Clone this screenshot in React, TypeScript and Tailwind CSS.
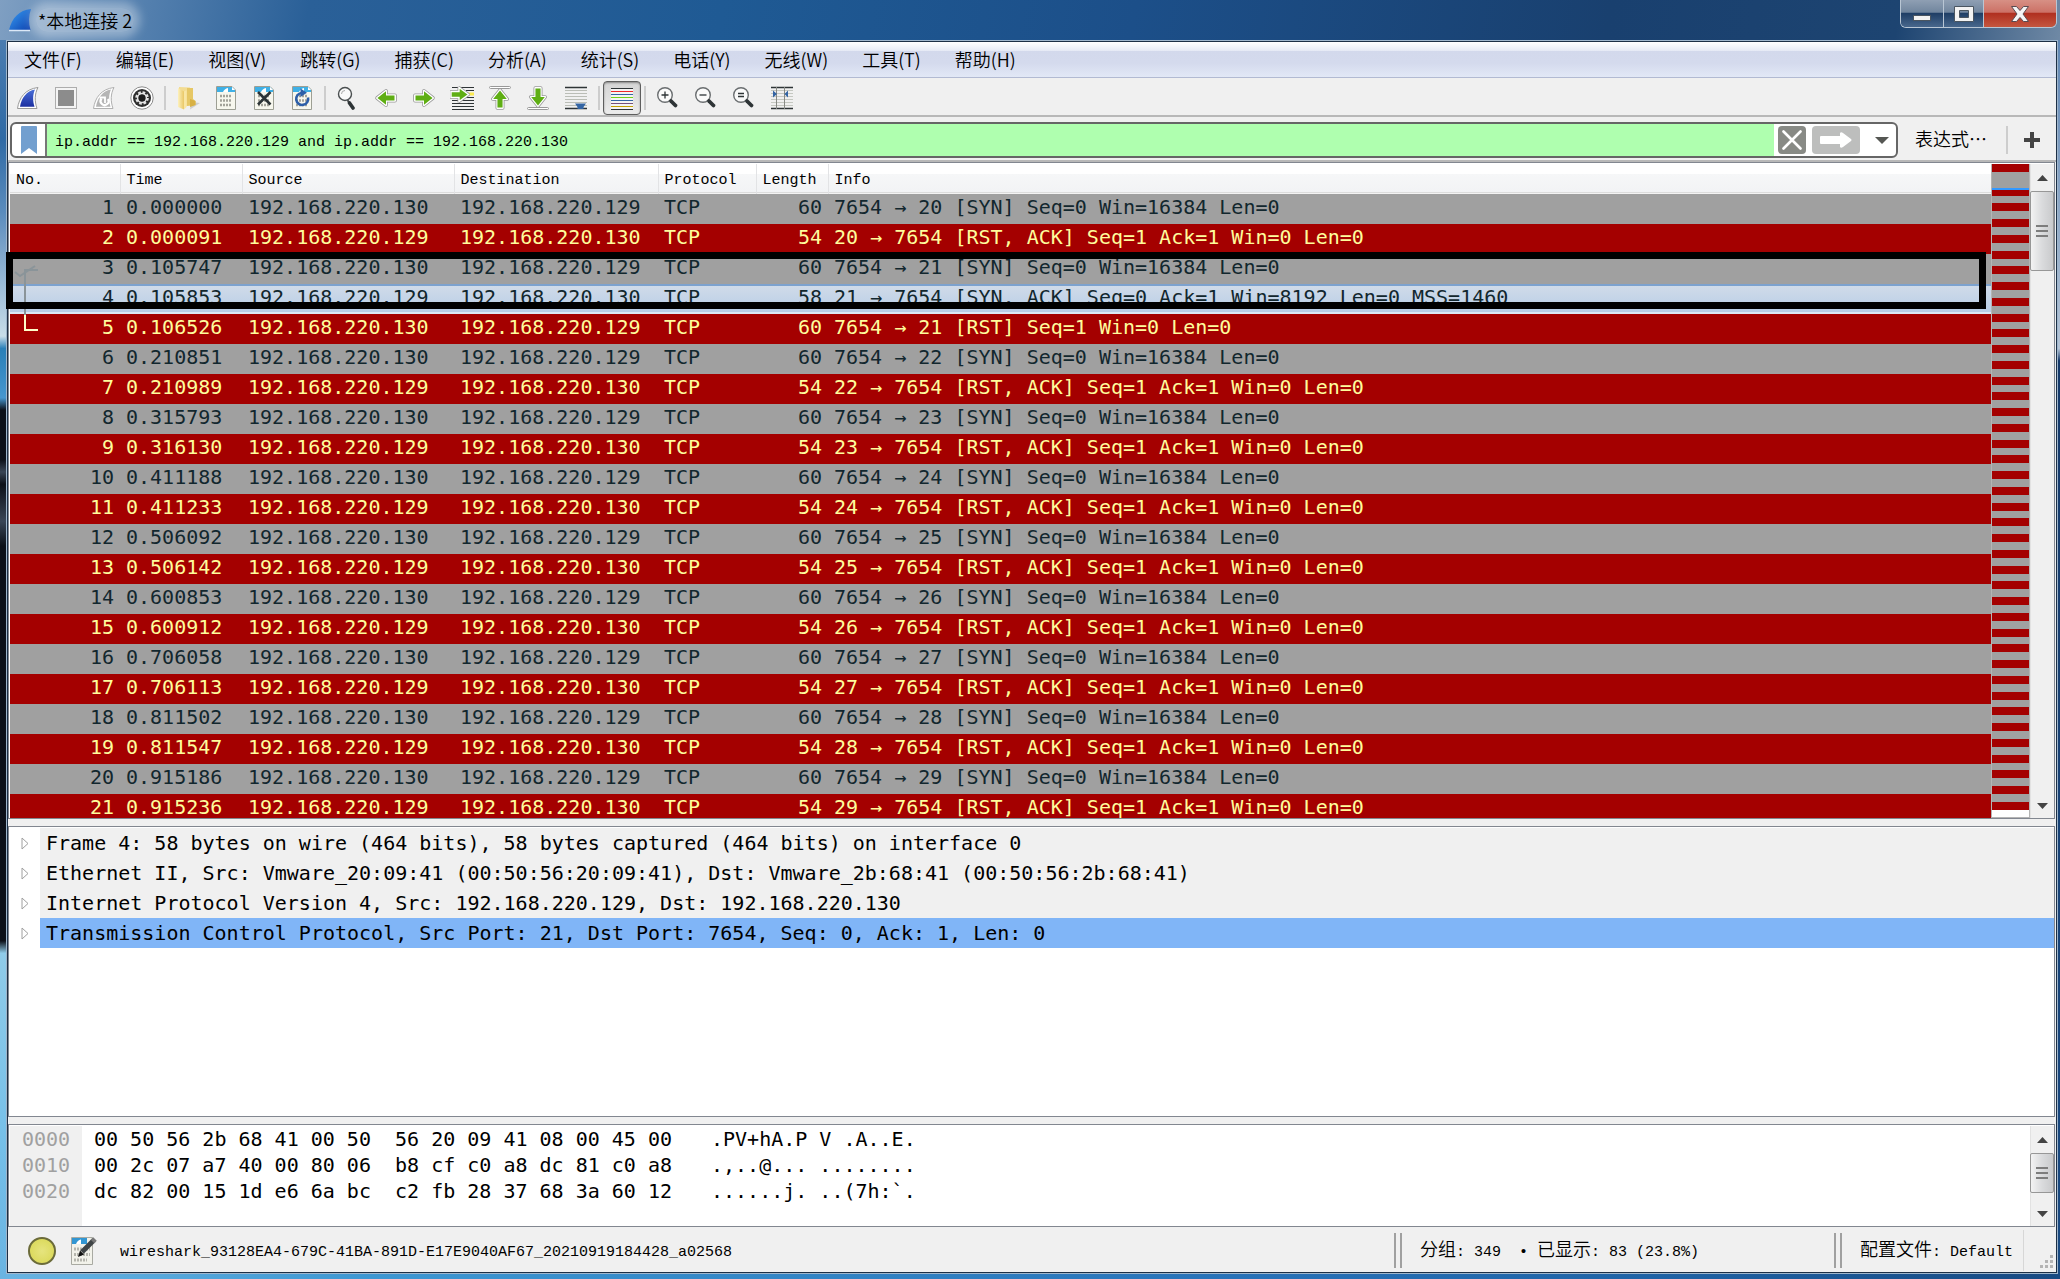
import React from "react";

const MONO = "font-['DejaVu_Sans_Mono',monospace]";
const SERIF = "font-['Liberation_Mono','Noto_Sans_CJK_SC',monospace]";
const CJK = "font-['Noto_Sans_CJK_SC',sans-serif]";

type Packet = { no: number; time: string; rev: boolean; len: number; info: string; kind: "syn" | "rst" | "sel" };

const times = [
  "0.000000", "0.000091", "0.105747", "0.105853", "0.106526", "0.210851", "0.210989",
  "0.315793", "0.316130", "0.411188", "0.411233", "0.506092", "0.506142", "0.600853",
  "0.600912", "0.706058", "0.706113", "0.811502", "0.811547", "0.915186", "0.915236",
];

const packets: Packet[] = times.map((time, i) => {
  const no = i + 1;
  if (no === 4)
    return { no, time, rev: true, len: 58, kind: "sel", info: "21 → 7654 [SYN, ACK] Seq=0 Ack=1 Win=8192 Len=0 MSS=1460" };
  if (no === 5) return { no, time, rev: false, len: 60, kind: "rst", info: "7654 → 21 [RST] Seq=1 Win=0 Len=0" };
  const port = no < 4 ? 20 + Math.floor(i / 2) : 22 + Math.floor((no - 6) / 2);
  const syn = no < 4 ? no % 2 === 1 : no % 2 === 0;
  return syn
    ? { no, time, rev: false, len: 60, kind: "syn", info: `7654 → ${port} [SYN] Seq=0 Win=16384 Len=0` }
    : { no, time, rev: true, len: 54, kind: "rst", info: `${port} → 7654 [RST, ACK] Seq=1 Ack=1 Win=0 Len=0` };
});

const rowStyle = {
  syn: "bg-[#a0a0a0] text-[#12272e]",
  rst: "bg-[#a40000] text-[#fffc9c]",
  sel: "bg-linear-to-b from-[#d2dce9] to-[#b6cce6] text-[#12272e] shadow-[inset_0_2px_0_#7da2ce,inset_0_-2px_0_#dce8f5]",
};

/* ---------- icons ---------- */

const Svg = ({ children, size = 24 }: { children: React.ReactNode; size?: number }) => (
  <svg width={size} height={size} viewBox="0 0 24 24" fill="none" aria-hidden="true">
    {children}
  </svg>
);

const finPath = "M1.5 22.5C3 12 9 3 22 1.5C18.5 8 18.5 15 21 22.5Z";

const FinStart = () => (
  <Svg>
    <defs>
      <linearGradient id="fin" x1="0" y1="0" x2="0" y2="1">
        <stop offset="0" stopColor="#4a6fd8" />
        <stop offset="1" stopColor="#1b2ea0" />
      </linearGradient>
    </defs>
    <path d={finPath} fill="#fff" stroke="#9a9a9a" />
    <path d="M4 20.8C5.5 12 10.500 5 19 3.500C16.500 9 16.800 15 18.500 20.800Z" fill="url(#fin)" />
  </Svg>
);
const Stop = () => (
  <Svg>
    <rect x="1.500" y="1.500" width="21" height="21" fill="#f4f4f4" stroke="#adadad" />
    <rect x="4" y="4" width="16" height="16" fill="#8c8c8c" />
  </Svg>
);
const FinRestart = () => (
  <Svg>
    <path d={finPath} fill="#fff" stroke="#b0b0b0" />
    <path d="M4 20.8C5.500 12 10.500 5 19 3.500C16.500 9 16.800 15 18.500 20.800Z" fill="#b5b5b5" />
    <path d="M9.500 12.500A4 4 0 1 0 16 13" stroke="#fff" strokeWidth="2.200" />
    <path d="M7.500 11.500H13V17" stroke="#fff" strokeWidth="1.800" />
  </Svg>
);
const Options = () => (
  <Svg>
    <circle cx="12" cy="12" r="11.200" fill="#fff" stroke="#8b8b8b" />
    <circle cx="12" cy="12" r="9" fill="#2e2e2e" />
    <circle cx="12" cy="12" r="5.500" stroke="#e4e4e4" strokeWidth="2.600" strokeDasharray="2.600 1.700" />
    <circle cx="12" cy="12" r="4.400" fill="none" stroke="#e4e4e4" strokeWidth="1.500" />
    <circle cx="12" cy="12" r="3.200" fill="#1c1c1c" />
  </Svg>
);
const Folder = () => (
  <Svg>
    <defs>
      <linearGradient id="fold" x1="0" y1="0" x2="1" y2="0">
        <stop offset="0" stopColor="#fdf1bd" />
        <stop offset="1" stopColor="#e9c765" />
      </linearGradient>
    </defs>
    <path d="M15 16L24 17L14 23.500Z" fill="#cfcfcf" />
    <path d="M3 1L14 1.500V19L8 21L3 20Z" fill="#f3dc92" />
    <path d="M11 2H17V13L19.500 15V19L11 20Z" fill="#e6c765" />
    <path d="M14 13L19.500 15V19L14 21Z" fill="#d8b145" />
    <path d="M2 2L8 5.500V23.500L2 21Z" fill="url(#fold)" />
    <path d="M8 5.500L10.500 4V21L8 23.500Z" fill="#f9e6a4" />
  </Svg>
);

const DocBase = () => (
  <>
    <path d="M2.500 .5H18L21.500 4V23.500H2.500Z" fill="#f7f7ee" stroke="#9d9f94" />
    <path d="M3 1H18L21 4V6H3Z" fill="#3fb0e6" />
    <path d="M9 6C10 4 11.500 2.500 14 2V6Z" fill="#fff" />
    <path d="M18 1V4H21" fill="#fff" />
    <g stroke="#a3a39a" strokeWidth="2.600" strokeDasharray="2 1">
      <path d="M6 10H18M6 14.500H18M6 19H18" />
    </g>
  </>
);
const DocSave = () => <Svg><DocBase /></Svg>;
const DocClose = () => (
  <Svg>
    <DocBase />
    <path d="M6 6L18.500 18.500M18.500 6L6 18.500" stroke="#2b3336" strokeWidth="2.600" />
  </Svg>
);
const DocReload = () => (
  <Svg>
    <DocBase />
    <path d="M18 11.500A6 6 0 1 1 11.500 7" stroke="#2d5fa8" strokeWidth="2.600" />
    <path d="M10.500 2.500L17 6.800L10.500 11Z" fill="#2d5fa8" />
  </Svg>
);

const Find = () => (
  <Svg>
    <circle cx="9" cy="8" r="6.500" fill="#fafafa" stroke="#4a4f50" strokeWidth="1.400" />
    <path d="M5.500 8A3.500 3.500 0 0 1 9 4.500" stroke="#aaa" />
    <path d="M11.500 14L13 16.500" stroke="#4a4f50" strokeWidth="2" />
    <path d="M13.500 17L17 22" stroke="#2e3436" strokeWidth="3.600" strokeLinecap="round" />
  </Svg>
);

const arrowRight = "M2 9H12V4L22 12L12 20V15H2Z";
const Green = ({ rot, bar }: { rot: 0 | 90 | 180 | 270; bar?: "top" | "bottom" }) => (
  <Svg>
    <g transform={`rotate(${rot} 12 12) ${bar ? "translate(-1 0)" : ""}`}>
      <path d={arrowRight} fill="#fff" stroke="#999" strokeWidth="4" strokeLinejoin="round" transform="translate(1.200 1.200) scale(.9)" />
      <path d={arrowRight} fill="#5fb015" stroke="#fff" strokeWidth="2.200" strokeLinejoin="round" transform="translate(1.200 1.200) scale(.9)" />
      <path d={arrowRight} fill="#5fae14" transform="translate(1.800 1.800) scale(.85)" />
    </g>
    {bar === "top" && <rect x="1.500" y=".5" width="21" height="2" rx="1" fill="#fff" stroke="#999" />}
    {bar === "bottom" && <rect x="1.500" y="21.500" width="21" height="2" rx="1" fill="#fff" stroke="#999" />}
  </Svg>
);

const GoTo = () => (
  <Svg>
    <path d="M2 1.500H24M2 14.500H24M2 17.500H24M2 20.500H24M2 23.500H24M16 4.500H24M2 11.500H24" stroke="#2e3436" />
    <rect x="17" y="6.500" width="7" height="3" fill="#fce94f" />
    <path d="M1 5.500H9V1.500L18.500 8.500L9 15.500V11.500H1Z" fill="#5fae14" stroke="#999" strokeWidth="3" strokeLinejoin="round" />
    <path d="M1 5.500H9V1.500L18.500 8.500L9 15.500V11.500H1Z" fill="#5fae14" stroke="#fff" strokeWidth="1.400" />
  </Svg>
);
const AutoScroll = () => (
  <Svg>
    <path d="M1 1.500H23M1 22.500H23" stroke="#2e3436" strokeWidth="1.300" />
    <path d="M1 4.500H23M1 7.500H23M1 10.500H23M1 13.500H23M1 16.500H23M1 19.500H23" stroke="#babdb6" />
    <path d="M11 17.500H22L19.500 21V23H13.500V21Z" fill="#3465a4" />
  </Svg>
);
const Colorize = () => (
  <Svg>
    <rect x="1" y="2" width="22" height="22" fill="#f4f4f4" />
    {["#2e3436", "#ef2929", "#3465a4", "#73d216", "#3465a4", "#75507b", "#c4a000", "#2e3436"].map((c, i) => (
      <path key={i} d={`M1 ${2.5 + i * 3}H23`} stroke={c} />
    ))}
  </Svg>
);
const Zoom = ({ d }: { d: string }) => (
  <Svg>
    <circle cx="9" cy="9" r="7.300" fill="#fafafa" stroke="#6a6e70" strokeWidth="1.400" />
    <path d={d} stroke="#2e3436" strokeWidth="1.300" />
    <path d="M15 15L19.500 19.500" stroke="#2e3436" strokeWidth="3.800" strokeLinecap="round" />
  </Svg>
);
const Columns = () => (
  <Svg>
    <path d="M1 1.500H23M1 22.500H23" stroke="#2e3436" strokeWidth="1.300" />
    <path d="M1 4.500H23M1 7.500H23M1 10.500H23M1 13.500H23M1 16.500H23M1 19.500H23" stroke="#c5c8c1" />
    <path d="M6.500 1V23M14.500 1V23" stroke="#888a85" />
    <path d="M3 4.500L7 8L3 11.500ZM18 4.500L14.500 8L18 11.500Z" fill="#3465a4" />
  </Svg>
);

const Tool = ({ label, on, children }: { label: string; on?: boolean; children: React.ReactNode }) => (
  <button
    type="button"
    aria-label={label}
    className={
      on
        ? "flex h-[34px] w-[38px] items-center justify-center rounded-sm border border-[#5e5e5e] bg-linear-to-b from-[#d4d4d4] to-[#ececec] shadow-[inset_0_1px_2px_#888]"
        : "flex h-[34px] w-[38px] items-center justify-center"
    }
  >
    {children}
  </button>
);
const Sep = () => <span className="mx-[3px] mb-[5px] h-6 w-[2px] bg-[#cdcdcd]" />;

/* ---------- scroll bars ---------- */

const ScrollBar = ({ thumb }: { thumb: string }) => (
  <div className="flex w-6 shrink-0 flex-col items-center bg-[#f0f0f0] shadow-[inset_1px_0_0_#e2e2e2]">
    <span className="flex h-[27px] items-center justify-center">
      <svg width="11" height="6" viewBox="0 0 11 6"><path d="M0 6L5.500 0L11 6Z" fill="#444" /></svg>
    </span>
    <div className={`${thumb} flex w-6 flex-col items-center justify-center gap-[3px] rounded-xs border border-[#979797] bg-linear-to-r from-[#f3f3f3] via-[#dadbdd] to-[#c9cacc]`}>
      <span className="h-[2px] w-3 bg-[#7d7d7d]" />
      <span className="h-[2px] w-3 bg-[#7d7d7d]" />
      <span className="h-[2px] w-3 bg-[#7d7d7d]" />
    </div>
    <span className="grow" />
    <span className="flex h-[25px] items-center justify-center">
      <svg width="11" height="6" viewBox="0 0 11 6"><path d="M0 0L5.500 6L11 0Z" fill="#444" /></svg>
    </span>
  </div>
);

/* ---------- sections ---------- */

const TitleBar = () => (
  <header className="flex h-10 shrink-0 items-start bg-[linear-gradient(100deg,#7f9fc2_0%,#5f88b4_5%,#2a6098_15%,#1f5a94_35%,#1c4f89_55%,#19406f_78%,#1d4471_92%,#6f89a5_100%)]">
    <div className="flex h-10 items-center pl-2">
      <svg width="24" height="24" viewBox="0 0 24 24" aria-hidden="true">
        <defs>
          <linearGradient id="logo" x1="0" y1="0" x2="1" y2="1">
            <stop offset="0" stopColor="#3aa0f5" />
            <stop offset="1" stopColor="#0b3fae" />
          </linearGradient>
        </defs>
        <path d="M1 22C4 10 11 2 23 1C20.500 8 20.500 15 22.500 22Z" fill="url(#logo)" />
        <path d="M1 22.500H22" stroke="#dce8f7" strokeWidth="1.500" />
      </svg>
      <h1 className={`${CJK} ml-1 rounded-full bg-white/35 px-[2px] text-[18px] leading-6 font-[350] text-black shadow-[0_0_10px_6px_rgba(255,255,255,0.35)]`}>
        *本地连接 2
      </h1>
    </div>
    <div className="mr-[3px] ml-auto flex h-7 overflow-hidden rounded-b-md border border-t-0 border-[#b9c6d4]">
      <button type="button" aria-label="最小化" className="flex w-[43px] items-center justify-center border-r border-[#b9c6d4] bg-[linear-gradient(#8f9fb3_0%,#71869e_45%,#203f66_50%,#48678c_100%)]">
        <svg width="18" height="18" viewBox="0 0 18 18"><rect x=".5" y="10.500" width="17" height="5" fill="#f2f2f2" stroke="#4a5560" /></svg>
      </button>
      <button type="button" aria-label="最大化" className="flex w-10 items-center justify-center border-r border-[#b9c6d4] bg-[linear-gradient(#8f9fb3_0%,#71869e_45%,#203f66_50%,#48678c_100%)]">
        <svg width="20" height="16" viewBox="0 0 20 16"><path fillRule="evenodd" d="M.5 .5H19.500V15.500H.5ZM5.500 4.500V11.500H14.500V4.500Z" fill="#f2f2f2" stroke="#4a5560" /></svg>
      </button>
      <button type="button" aria-label="关闭" className="flex w-[72px] items-center justify-center bg-[linear-gradient(#d79085_0%,#cc7166_45%,#b03020_50%,#c4563f_100%)]">
        <svg width="18" height="16" viewBox="0 0 18 16"><path d="M.5 .5H5.500L9 4.500L12.500 .5H17.500L12 8L17.500 15.500H12.500L9 11.500L5.500 15.500H.5L6 8Z" fill="#f5f5f5" stroke="#5a4a50" /></svg>
      </button>
    </div>
  </header>
);

const menus = ["文件(F)", "编辑(E)", "视图(V)", "跳转(G)", "捕获(C)", "分析(A)", "统计(S)", "电话(Y)", "无线(W)", "工具(T)", "帮助(H)"];

const MenuBar = () => (
  <nav className={`${CJK} flex h-9 shrink-0 items-center gap-[34px] border-b border-[#b2bad2] bg-[linear-gradient(#ffffff_0%,#e6eaf5_25%,#d3d9ec_26%,#d4daed_60%,#e2e8f6_100%)] pb-[2px] pl-4 text-[18px] font-[350] text-black`}>
    {menus.map((m) => (
      <button key={m} type="button" className="leading-8">{m}</button>
    ))}
  </nav>
);

const ToolBar = () => (
  <div className="flex h-[39px] shrink-0 items-end border-b-2 border-[#b8b8b8] bg-[#f0f0f0] pl-px">
    <Tool label="开始捕获"><FinStart /></Tool>
    <Tool label="停止捕获"><Stop /></Tool>
    <Tool label="重新捕获"><FinRestart /></Tool>
    <Tool label="捕获选项"><Options /></Tool>
    <Sep />
    <Tool label="打开"><Folder /></Tool>
    <Tool label="保存"><DocSave /></Tool>
    <Tool label="关闭文件"><DocClose /></Tool>
    <Tool label="重新加载"><DocReload /></Tool>
    <Sep />
    <Tool label="查找"><Find /></Tool>
    <Tool label="上一分组"><Green rot={180} /></Tool>
    <Tool label="下一分组"><Green rot={0} /></Tool>
    <Tool label="转到分组"><GoTo /></Tool>
    <Tool label="首个分组"><Green rot={270} bar="top" /></Tool>
    <Tool label="最后分组"><Green rot={90} bar="bottom" /></Tool>
    <Tool label="自动滚动"><AutoScroll /></Tool>
    <Sep />
    <Tool label="着色" on><Colorize /></Tool>
    <Sep />
    <Tool label="放大"><Zoom d="M9 5.500V12.500M5.500 9H12.500" /></Tool>
    <Tool label="缩小"><Zoom d="M5.500 9H12.500" /></Tool>
    <Tool label="原始大小"><Zoom d="M6 7.500H12M6 10.500H12" /></Tool>
    <Tool label="调整列宽"><Columns /></Tool>
  </div>
);

const FilterBar = () => (
  <div className="flex h-[45px] shrink-0 items-center border-b-2 border-[#b8b8b8] bg-[#f0f0f0] pt-[3px] pl-[2px]">
    <div className="flex h-9 grow items-center overflow-hidden rounded-md border-2 border-[#666] bg-white">
      <button type="button" aria-label="书签" className="flex h-8 w-[35px] items-center justify-center border-r-2 border-[#777]">
        <svg width="16" height="28" viewBox="0 0 16 28"><path d="M0 1Q0 0 1 0H15Q16 0 16 1V28L8 22L0 28Z" fill="#729fcf" /></svg>
      </button>
      <input
        aria-label="显示过滤器"
        defaultValue="ip.addr == 192.168.220.129 and ip.addr == 192.168.220.130"
        className={`${SERIF} h-8 grow bg-[#afffaf] px-2 pt-1 text-[15px] text-black outline-none`}
      />
      <button type="button" aria-label="清除" className="ml-1 flex h-7 w-7 items-center justify-center rounded-sm bg-[#888a85]">
        <svg width="20" height="20" viewBox="0 0 20 20"><path d="M1.500 1.500L18.500 18.500M18.500 1.500L1.500 18.500" stroke="#fff" strokeWidth="2.600" strokeLinecap="round" /></svg>
      </button>
      <button type="button" aria-label="应用" className="ml-[6px] flex h-7 w-12 items-center justify-center rounded-sm bg-[#bdbebd]">
        <svg width="32" height="16" viewBox="0 0 32 16"><path d="M1 4H20V1Q21 -.5 23 1L31 7Q32 8 31 9L23 15Q21 16.500 20 15V12H1Q0 12 0 11V5Q0 4 1 4Z" fill="#fff" /></svg>
      </button>
      <button type="button" aria-label="最近" className="flex h-7 w-9 items-center justify-center pl-2">
        <svg width="14" height="7" viewBox="0 0 14 7"><path d="M0 0H14L7 7Z" fill="#555753" /></svg>
      </button>
    </div>
    <button type="button" className={`${CJK} ml-[17px] pb-1 text-[18px] leading-7 font-[350] text-black`}>表达式⋯</button>
    <span className="ml-[19px] h-7 w-[2px] bg-[#cdcdcd]" />
    <button type="button" aria-label="添加" className="mr-4 ml-4 flex h-7 w-4 items-center justify-center">
      <svg width="16" height="16" viewBox="0 0 16 16"><path d="M6 0H10V6H16V10H10V16H6V10H0V6H6Z" fill="#444" /></svg>
    </button>
  </div>
);

const heads = ["No.", "Time", "Source", "Destination", "Protocol", "Length", "Info"];

const PacketList = () => (
  <section className="relative flex min-h-0 grow-[654] basis-0 border border-[#828790] bg-white pt-px pl-px">
    <div className="min-w-0 grow overflow-hidden">
      <table className="w-full table-fixed border-collapse text-left">
        <colgroup>
          <col className="w-[110px]" />
          <col className="w-[122px]" />
          <col className="w-[212px]" />
          <col className="w-[204px]" />
          <col className="w-[98px]" />
          <col className="w-[72px]" />
          <col />
        </colgroup>
        <thead>
          <tr className={`${SERIF} h-[30px] bg-[linear-gradient(#ffffff_0%,#ffffff_32%,#f6f7f8_33%,#f2f3f5_92%,#d5d5d5_94%,#fff_100%)] text-[15px] leading-5 text-black`}>
            {heads.map((h, i) => (
              <th key={h} className={i < 6 ? "border-r border-[#e2e3e5] p-0 pt-1 pl-[6px] font-normal" : "p-0 pt-1 pl-[6px] font-normal"}>{h}</th>
            ))}
          </tr>
        </thead>
        <tbody className={`${MONO} text-[20px] leading-6`}>
          {packets.map((p) => (
            <tr key={p.no} className={`${rowStyle[p.kind]} h-[30px] whitespace-pre`}>
              <td className="p-0 pr-[6px] pb-1 text-right">{p.no}</td>
              <td className="p-0 pb-1 pl-[6px]">{p.time}</td>
              <td className="p-0 pb-1 pl-[6px]">{p.rev ? "192.168.220.129" : "192.168.220.130"}</td>
              <td className="p-0 pb-1 pl-[6px]">{p.rev ? "192.168.220.130" : "192.168.220.129"}</td>
              <td className="p-0 pb-1 pl-[6px]">TCP</td>
              <td className="p-0 pr-[6px] pb-1 text-right">{p.len}</td>
              <td className="overflow-hidden p-0 pb-1 pl-[6px]">{p.info}</td>
            </tr>
          ))}
        </tbody>
      </table>
    </div>
    <div className="flex w-[39px] shrink-0 flex-col border-x border-b border-[#b4b4b4]">
      {Array.from({ length: 82 }, (_, i) => (
        <span
          key={i}
          className={i === 0 || (i > 2 && i % 2 === 1) ? "grow basis-0 bg-[#a40000]" : "grow basis-0 bg-[#a0a0a0]"}
        >
          {i === 3 && <span className="block h-[2px] bg-[#3399ff]" />}
        </span>
      ))}
      <span className="h-[7px] shrink-0 bg-white" />
    </div>
    <ScrollBar thumb="h-20" />
    <svg className="absolute top-[98px] left-0 h-[74px] w-9" viewBox="0 0 36 74" fill="none" aria-hidden="true">
      <path d="M29 9H16V54" stroke="#8a9499" strokeWidth="2" />
      <path d="M6 11L11 15L26 5" stroke="#8a9499" strokeWidth="2" />
      <path d="M16 54V69H29" stroke="#fffcc8" strokeWidth="2" />
    </svg>
    <div className="absolute top-[89px] right-[68px] -left-[3px] h-[57px] border-[7px] border-black" />
  </section>
);

const details = [
  "Frame 4: 58 bytes on wire (464 bits), 58 bytes captured (464 bits) on interface 0",
  "Ethernet II, Src: Vmware_20:09:41 (00:50:56:20:09:41), Dst: Vmware_2b:68:41 (00:50:56:2b:68:41)",
  "Internet Protocol Version 4, Src: 192.168.220.129, Dst: 192.168.220.130",
  "Transmission Control Protocol, Src Port: 21, Dst Port: 7654, Seq: 0, Ack: 1, Len: 0",
];

const PacketDetails = () => (
  <section className="mt-[7px] min-h-0 grow-[288] basis-0 overflow-hidden border border-[#828790] bg-white pt-px">
    <ul className={`${MONO} text-[20px] leading-[30px] text-black`}>
      {details.map((d, i) => (
        <li key={d} className="flex whitespace-pre">
          <button type="button" aria-label="展开" className="flex w-[31px] shrink-0 items-center justify-center">
            <svg width="8" height="13" viewBox="0 0 8 13" fill="none"><path d="M1 1L7 6.500L1 12Z" stroke="#a0a0a0" /></svg>
          </button>
          <span className={i === 3 ? "h-[30px] grow bg-[#80b5f7] pl-[6px]" : "h-[30px] grow bg-[#f0f0f0] pl-[6px]"}>{d}</span>
        </li>
      ))}
    </ul>
  </section>
);

const bytes = [
  ["0000", "00 50 56 2b 68 41 00 50  56 20 09 41 08 00 45 00", ".PV+hA.P V .A..E."],
  ["0010", "00 2c 07 a7 40 00 80 06  b8 cf c0 a8 dc 81 c0 a8", ".,..@... ........"],
  ["0020", "dc 82 00 15 1d e6 6a bc  c2 fb 28 37 68 3a 60 12", "......j. ..(7h:`."],
];

const PacketBytes = () => (
  <section className="mt-[7px] flex min-h-0 grow-[100] basis-0 border border-[#828790] bg-white pt-px pl-px">
    <div className={`${MONO} flex grow text-[20px] leading-[26px] whitespace-pre text-black`}>
      <div className="w-[72px] bg-[#f0f0f0] pl-3 text-[#a0a0a0]">
        {bytes.map((b) => <p key={b[0]}>{b[0]}</p>)}
      </div>
      <div className="w-[618px] pl-3">
        {bytes.map((b) => <p key={b[0]}>{b[1]}</p>)}
      </div>
      <div className="pl-[11px]">
        {bytes.map((b) => <p key={b[0]}>{b[2]}</p>)}
      </div>
    </div>
    <ScrollBar thumb="h-[40px] shrink-0" />
  </section>
);

const Handle = () => (
  <span className="h-[35px] w-2 shrink-0 border-x-2 border-[#a0a0a0]" />
);
const Zh = ({ children }: { children: React.ReactNode }) => <span className={`${CJK} text-[18px] font-[350]`}>{children}</span>;

const StatusBar = () => (
  <footer className={`${SERIF} flex h-[45px] shrink-0 items-center bg-[#f0f0f0] pt-[2px] text-[15px] leading-7 whitespace-pre text-black`}>
    <span className="ml-5 h-7 w-7 rounded-full border-2 border-[#6b6b3a] bg-radial from-[#e6e47e] to-[#d8d64e]" />
    <button type="button" aria-label="注释" className="ml-[14px] h-7 w-7">
      <svg width="28" height="28" viewBox="0 0 28 28" fill="none">
        <path d="M1.500 .5H22.500V27.500H1.500Z" fill="#f2f2ea" stroke="#a9aaa2" />
        <path d="M2 1H17V7H2Z" fill="#3296d2" />
        <path d="M6 7C7 4.500 8.500 3 11 2.500V7Z" fill="#fff" />
        <path d="M4 12H20M4 17.500H20M4 23H17" stroke="#b5b5ad" strokeWidth="3" strokeDasharray="2 1" />
        <path d="M12 15L24 3" stroke="#3f4446" strokeWidth="5" />
        <path d="M8 20L10 13.500L14 17.500Z" fill="#111" />
        <path d="M22.500 4.500L25 2" stroke="#777" strokeWidth="5" />
      </svg>
    </button>
    <span className="ml-[22px] grow pt-1">wireshark_93128EA4-679C-41BA-891D-E17E9040AF67_20210919184428_a02568</span>
    <Handle />
    <span className="w-[432px] pl-[18px]"><Zh>分组</Zh>{": 349  • "}<Zh>已显示</Zh>: 83 (23.8%)</span>
    <Handle />
    <span className="border-r border-[#d7d7d7] py-1 pr-[10px] pl-[18px]"><Zh>配置文件</Zh>: Default</span>
    <svg className="mr-[2px] ml-4 self-end" width="14" height="18" viewBox="0 0 14 18" aria-hidden="true">
      <path d="M10 1h3v3h-3zM10 6h3v3h-3zM5 6h3v3h-3zM10 11h3v3h-3zM5 11h3v3h-3zM0 11h3v3h-3z" fill="#b4b4b4" />
    </svg>
  </footer>
);

export default function App() {
  return (
    <div className="flex h-screen flex-col bg-[#1f5a94]">
      <TitleBar />
      <div className="flex min-h-0 grow">
        <div className="w-[6px] shrink-0 bg-[linear-gradient(#4a7cb0_0%,#2f6aa5_8%,#5b8cbd_14%,#c8dde9_24%,#2a7fb8_25%,#4797cf_29%,#0c1018_30%,#0c1018_34%,#3a4656_35%,#0c1018_36%,#3a4656_39%,#0c1018_41%,#0c1018_52%,#0c1018_73%,#8fcbe9_74%,#74bfe9_90%,#6ab4e2_100%)]" />
        <main className="flex min-w-0 grow flex-col border border-[#9fb6cc] bg-[#f0f0f0]">
          <div className="flex min-h-0 grow flex-col border border-[#1c2f45]">
            <MenuBar />
            <ToolBar />
            <FilterBar />
            <div className="mr-px flex min-h-0 grow flex-col">
              <PacketList />
              <PacketDetails />
              <PacketBytes />
            </div>
            <StatusBar />
          </div>
        </main>
        <div className="w-[2px] shrink-0 bg-[linear-gradient(#5f86b4_0%,#b4c4d6_25%,#163a6b_26%,#1a4a82_100%)]" />
      </div>
      <div className="h-[5px] shrink-0 bg-[linear-gradient(90deg,#6ab4e2_0%,#3d97d2_18%,#2872b8_60%,#1f63a6_80%,#184a82_100%)]" />
    </div>
  );
}
